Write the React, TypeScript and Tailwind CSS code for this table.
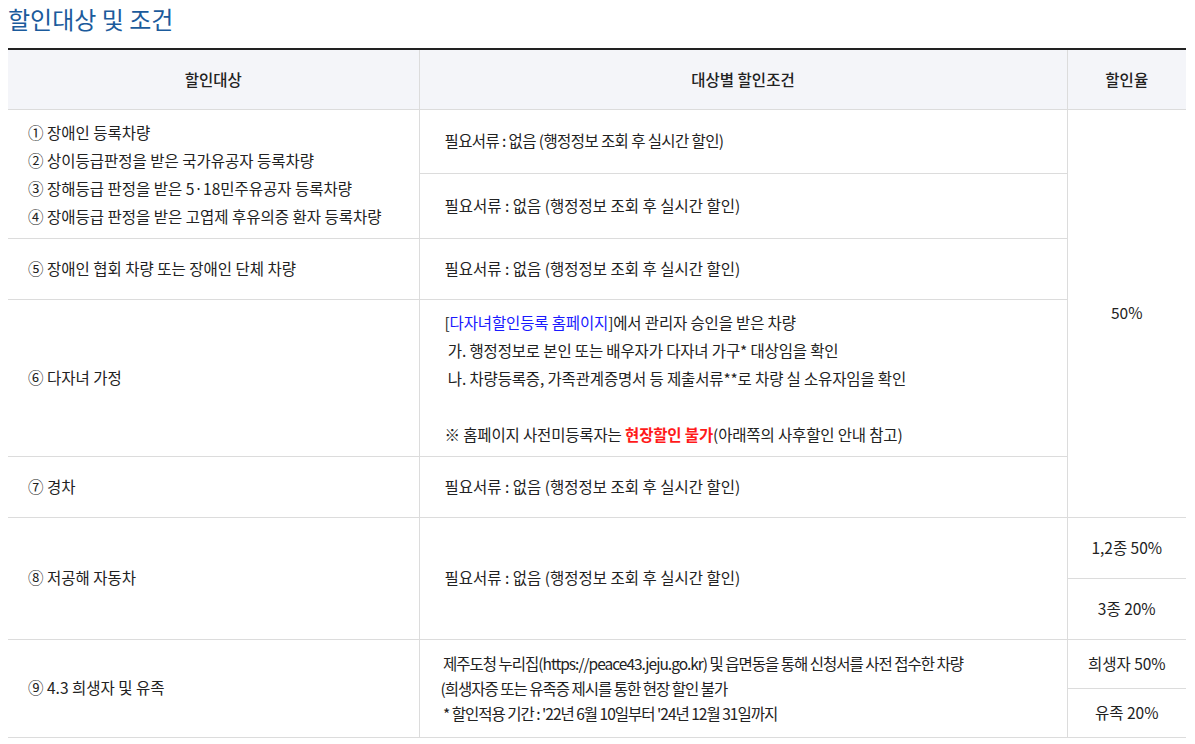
import React from 'react';

const cell = 'border-b border-[#dcdcdc] align-middle';

export default function App() {
  return (
    <div
      className="bg-white min-h-screen px-2 pt-[3px] text-[#222]"
      style={{ fontFamily: '"Noto Sans CJK KR", "Noto Sans", sans-serif' }}
    >
      <h2 className="text-[24px] leading-[32px] text-[#1b5b9c]">할인대상 및 조건</h2>
      <table className="mt-[13px] w-[1178px] table-fixed border-collapse text-[15.5px]">
        <colgroup>
          <col className="w-[411px]" />
          <col className="w-[648px]" />
          <col className="w-[119px]" />
        </colgroup>
        <thead>
          <tr className="h-[60px] bg-[#f4f5f9] border-t-2 border-[#222]">
            <th className={`${cell} font-medium border-r`}>할인대상</th>
            <th className={`${cell} font-medium border-r`}>대상별 할인조건</th>
            <th className={`${cell} font-medium`}>할인율</th>
          </tr>
        </thead>
        <tbody>
          <tr className="h-[64px]">
            <td rowSpan={2} className={`${cell} border-r pl-5 leading-[28px]`}>
              <div>① 장애인 등록차량</div>
              <div>② 상이등급판정을 받은 국가유공자 등록차량</div>
              <div>③ 장해등급 판정을 받은 5·18민주유공자 등록차량</div>
              <div>④ 장애등급 판정을 받은 고엽제 후유의증 환자 등록차량</div>
            </td>
            <td className={`${cell} border-r pl-[25px] tracking-[-0.6px]`}>필요서류 : 없음 (행정정보 조회 후 실시간 할인)</td>
            <td rowSpan={5} className={`${cell} text-center`}>50%</td>
          </tr>
          <tr className="h-[65px]">
            <td className={`${cell} border-r pl-[25px]`}>필요서류 : 없음 (행정정보 조회 후 실시간 할인)</td>
          </tr>
          <tr className="h-[61px]">
            <td className={`${cell} border-r pl-5`}>⑤ 장애인 협회 차량 또는 장애인 단체 차량</td>
            <td className={`${cell} border-r pl-[25px]`}>필요서류 : 없음 (행정정보 조회 후 실시간 할인)</td>
          </tr>
          <tr className="h-[157px]">
            <td className={`${cell} border-r pl-5`}>⑥ 다자녀 가정</td>
            <td className={`${cell} border-r pl-[25px] leading-[28px] tracking-[-0.15px]`}>
              <div>
                [<span className="text-[#1a1aff]">다자녀할인등록 홈페이지</span>]에서 관리자 승인을 받은 차량
              </div>
              <div>&nbsp;가. 행정정보로 본인 또는 배우자가 다자녀 가구* 대상임을 확인</div>
              <div>&nbsp;나. 차량등록증, 가족관계증명서 등 제출서류**로 차량 실 소유자임을 확인</div>
              <div>&nbsp;</div>
              <div>
                ※ 홈페이지 사전미등록자는 <span className="font-bold text-[#ff1a1a]">현장할인 불가</span>(아래쪽의 사후할인 안내 참고)
              </div>
            </td>
          </tr>
          <tr className="h-[61px]">
            <td className={`${cell} border-r pl-5`}>⑦ 경차</td>
            <td className={`${cell} border-r pl-[25px]`}>필요서류 : 없음 (행정정보 조회 후 실시간 할인)</td>
          </tr>
          <tr className="h-[61px]">
            <td rowSpan={2} className={`${cell} border-r pl-5`}>⑧ 저공해 자동차</td>
            <td rowSpan={2} className={`${cell} border-r pl-[25px]`}>필요서류 : 없음 (행정정보 조회 후 실시간 할인)</td>
            <td className={`${cell} text-center`}>1,2종 50%</td>
          </tr>
          <tr className="h-[61px]">
            <td className={`${cell} text-center`}>3종 20%</td>
          </tr>
          <tr className="h-[49px]">
            <td rowSpan={2} className={`${cell} border-r pl-5`}>⑨ 4.3 희생자 및 유족</td>
            <td rowSpan={2} className={`${cell} border-r pl-[21px] leading-[25px] tracking-[-1px]`}>
              <div>&nbsp;제주도청 누리집(https://peace43.jeju.go.kr) 및 읍면동을 통해 신청서를 사전 접수한 차량</div>
              <div>(희생자증 또는 유족증 제시를 통한 현장 할인 불가</div>
              <div>&nbsp;* 할인적용 기간 : '22년 6월 10일부터 '24년 12월 31일까지</div>
            </td>
            <td className={`${cell} text-center`}>희생자 50%</td>
          </tr>
          <tr className="h-[49px]">
            <td className={`${cell} text-center`}>유족 20%</td>
          </tr>
        </tbody>
      </table>
    </div>
  );
}
